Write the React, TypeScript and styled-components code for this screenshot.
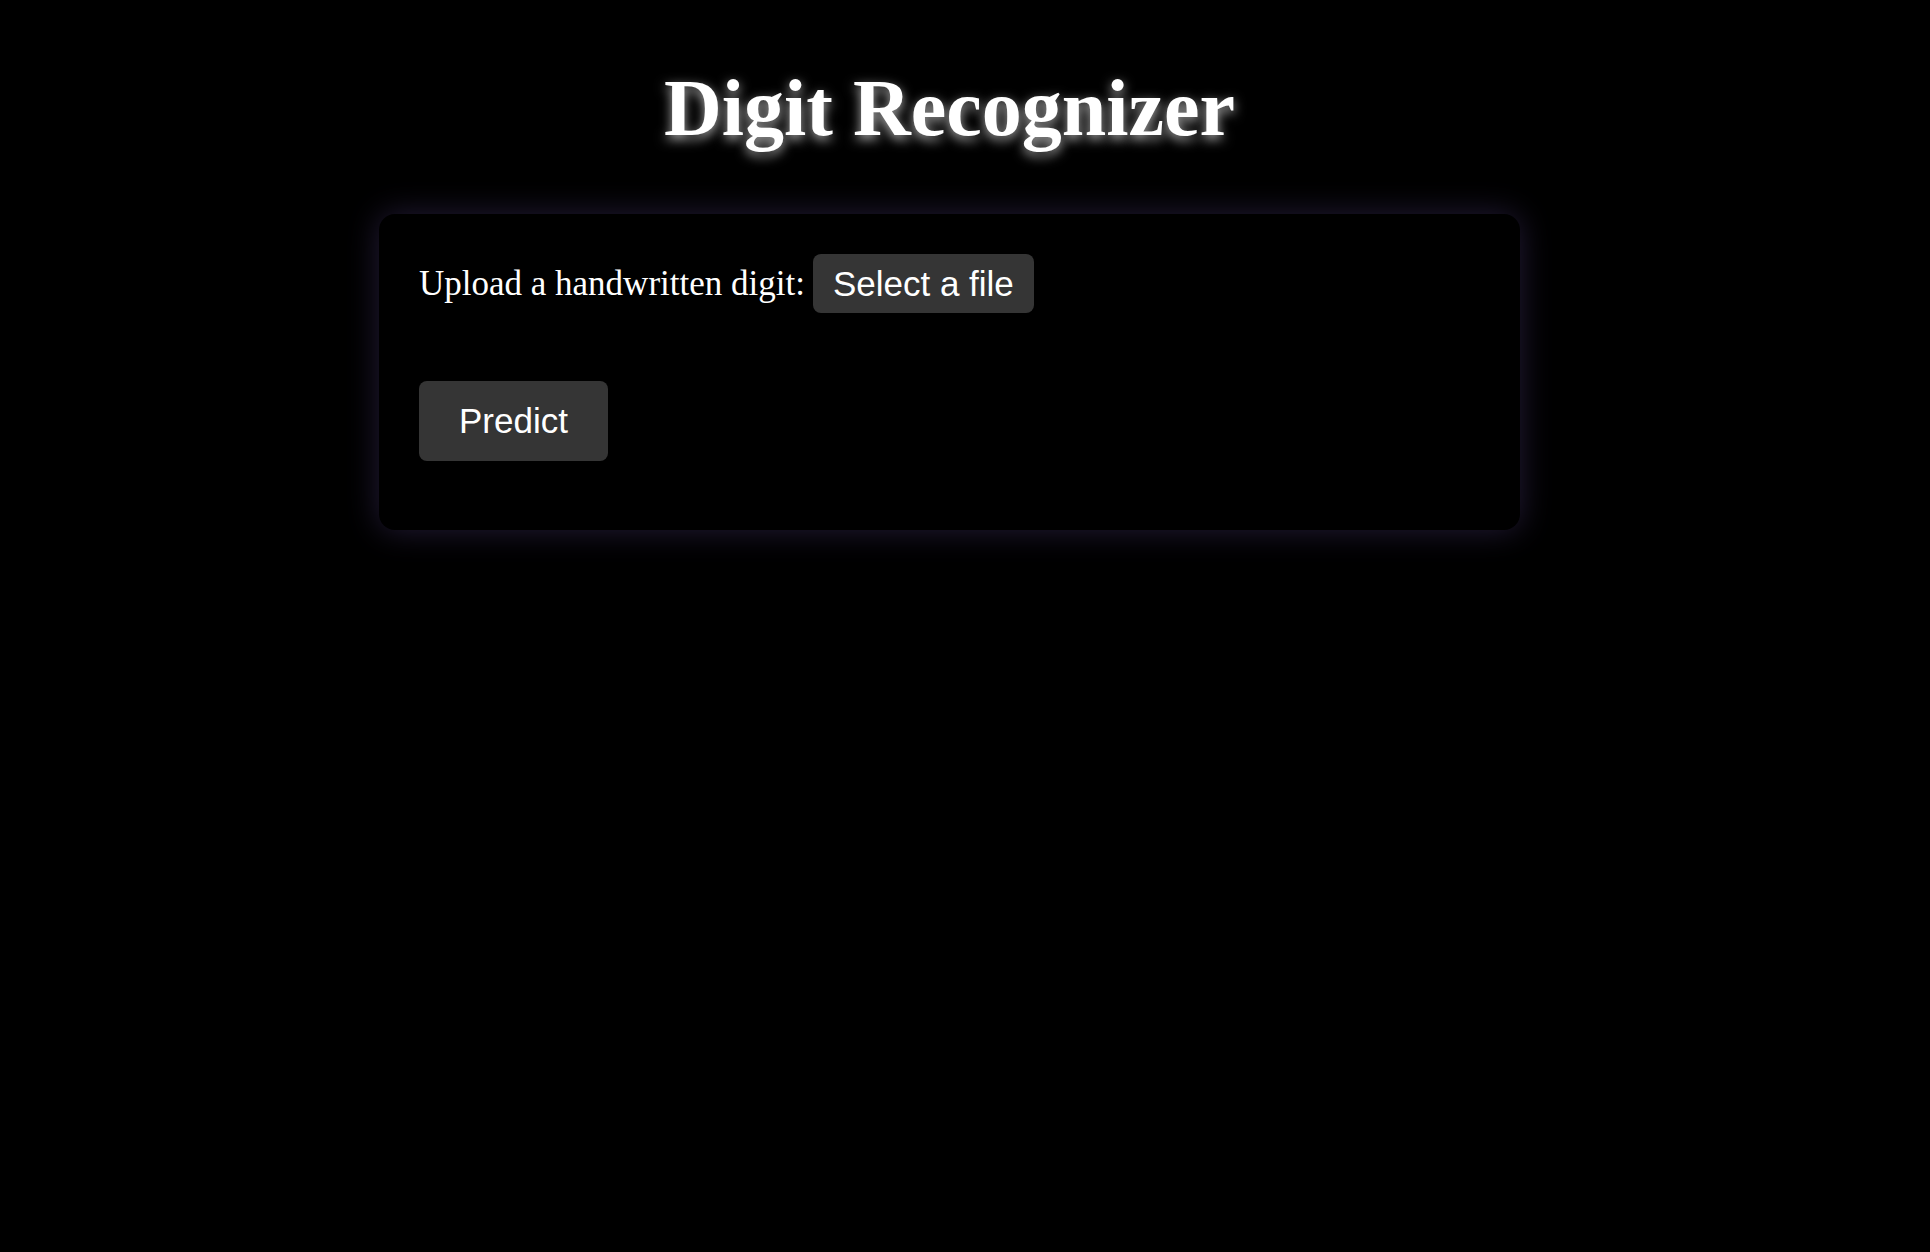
import React from "react";
import styled, { createGlobalStyle } from "styled-components";

const GlobalStyle = createGlobalStyle`
  html, body {
    margin: 0;
    padding: 0;
    background: #000;
    min-height: 100%;
  }
  body {
    font-family: "Liberation Serif", "Times New Roman", serif;
    color: #fff;
  }
`;

const Page = styled.main`
  min-height: 100vh;
  box-sizing: border-box;
  padding: 63px 31px 40px 0;
  display: flex;
  flex-direction: column;
  align-items: center;
  background: #000;
`;

const Title = styled.h1`
  margin: 0 0 60px;
  font-family: "Liberation Serif", "Times New Roman", serif;
  font-weight: 700;
  font-size: 80px;
  line-height: normal;
  color: #fff;
  text-shadow: 0 4px 12px rgba(255, 255, 255, 0.7);
`;

const Card = styled.section`
  width: 1141px;
  box-sizing: border-box;
  padding: 40px 40px 69px;
  background: #000;
  border-radius: 16px;
  box-shadow: 0 0 32px rgba(90, 70, 140, 0.4);
  display: flex;
  flex-direction: column;
  align-items: flex-start;
  gap: 68px;
`;

const UploadRow = styled.div`
  display: flex;
  align-items: center;
  gap: 8px;
`;

const Label = styled.label`
  font-family: "Liberation Serif", "Times New Roman", serif;
  font-size: 35px;
  color: #fff;
`;

const FileButton = styled.label`
  display: inline-flex;
  align-items: center;
  height: 59px;
  padding: 0 20px;
  box-sizing: border-box;
  background: #353535;
  border-radius: 8px;
  color: #fff;
  font-family: "Liberation Sans", Arial, sans-serif;
  font-size: 35px;
  cursor: pointer;
  input {
    display: none;
  }
`;

const PredictButton = styled.button`
  height: 80px;
  padding: 0 40px;
  border: none;
  border-radius: 8px;
  background: #353535;
  color: #fff;
  font-family: "Liberation Sans", Arial, sans-serif;
  font-size: 35px;
  cursor: pointer;
`;

export default function App() {
  return (
    <>
      <GlobalStyle />
      <Page>
        <Title>Digit Recognizer</Title>
        <Card>
          <UploadRow>
            <Label htmlFor="digit-file">Upload a handwritten digit:</Label>
            <FileButton>
              Select a file
              <input id="digit-file" type="file" accept="image/*" />
            </FileButton>
          </UploadRow>
          <PredictButton type="button">Predict</PredictButton>
        </Card>
      </Page>
    </>
  );
}
